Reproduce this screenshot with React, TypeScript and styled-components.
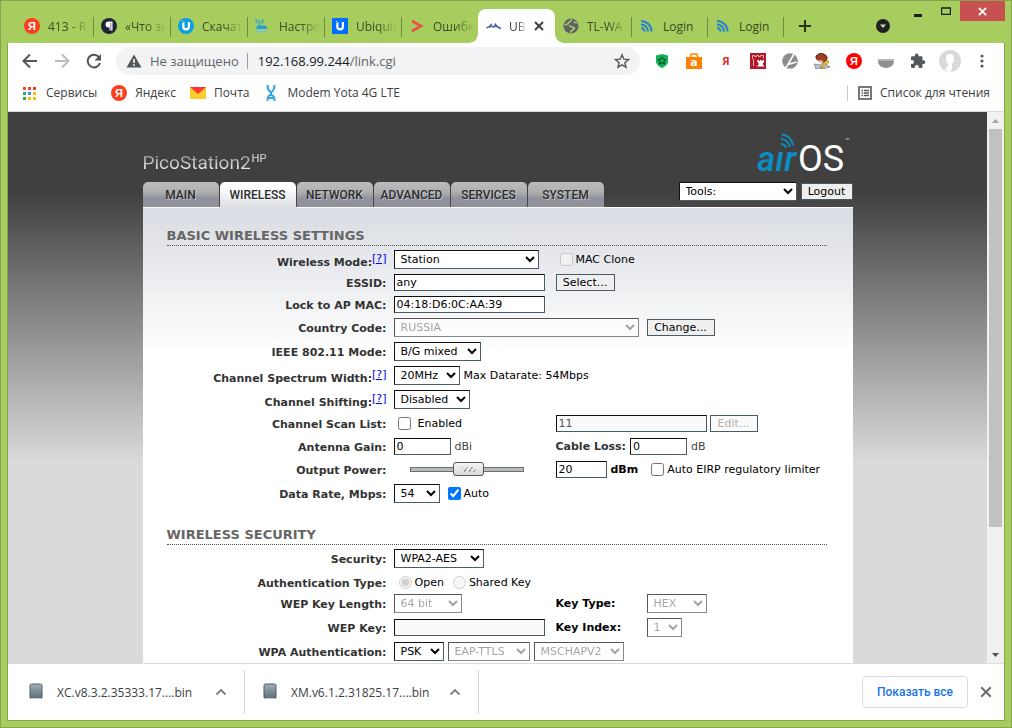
import React from "react";
import styled, { createGlobalStyle, css } from "styled-components";

const uiFont = '"Open Sans", "Noto Sans", sans-serif';
const pageFont = '"DejaVu Sans", Verdana, sans-serif';
const brandFont = 'Roboto, "Liberation Sans", sans-serif';

const GlobalStyle = createGlobalStyle`
  *, *::before, *::after { box-sizing: border-box; }
  body { margin: 0; font-family: ${uiFont}; font-size: 12px; color: #3c4043; }
  button, input, select { font: inherit; margin: 0; }
  svg { display: block; flex: none; }
`;

/* ---------- window frame ---------- */

const Frame = styled.div`
  display: flex;
  flex-direction: column;
  height: 100vh;
  border: 1px solid #87a34d;
  background: #a6cd5e;
`;

const TabStrip = styled.div`
  display: flex;
  height: 42px;
  flex: none;
  padding: 0 6px 0 15px;
`;

const Client = styled.div`
  flex: 1;
  min-height: 0;
  display: flex;
  flex-direction: column;
  margin: 0 6px 6px;
  border: 1px solid #87a34d;
  border-top: 0;
  background: #fff;
`;

const BrowserTab = styled.button<{ $active?: boolean; $narrow?: boolean }>`
  position: relative;
  display: flex;
  align-items: center;
  gap: 8px;
  flex: none;
  width: ${(p) => (p.$narrow ? 76 : 77)}px;
  height: 34px;
  margin-top: 8px;
  padding: 0 2px 0 8px;
  border: 0;
  background: none;
  color: #3d4a23;
  text-align: left;
  ${(p) =>
    p.$active
      ? css`
          gap: 7px;
          padding-right: 11px;
          background: #fff;
          border-radius: 8px 8px 0 0;
          color: #3c4043;
          &::before,
          &::after {
            content: "";
            position: absolute;
            bottom: 0;
            width: 8px;
            height: 8px;
          }
          &::before {
            left: -8px;
            background: radial-gradient(circle at 0 0, transparent 7px, #fff 8px);
          }
          &::after {
            right: -8px;
            background: radial-gradient(circle at 100% 0, transparent 7px, #fff 8px);
          }
        `
      : ""}
`;

const TabTitle = styled.span<{ $plain?: boolean }>`
  flex: 1;
  min-width: 0;
  overflow: hidden;
  white-space: nowrap;
  ${(p) => (p.$plain ? "" : "mask-image: linear-gradient(90deg, #000 50%, transparent 96%);")}
`;

const TabDivider = styled.i`
  position: absolute;
  right: -1px;
  top: 8px;
  width: 1px;
  height: 20px;
  background: #70893f;
`;

const StripButton = styled.button<{ $push?: boolean }>`
  display: flex;
  align-items: center;
  justify-content: center;
  width: 28px;
  height: 34px;
  margin: 8px 0 0 ${(p) => (p.$push ? "auto" : "8px")};
  padding: 0;
  border: 0;
  background: none;
`;

const WindowButtons = styled.div`
  display: flex;
  margin-left: 7px;
`;

const WindowButton = styled.button<{ $close?: boolean }>`
  display: flex;
  align-items: center;
  justify-content: center;
  width: ${(p) => (p.$close ? 45 : 28)}px;
  height: 20px;
  padding: 0;
  border: 0;
  background: ${(p) => (p.$close ? "#c75050" : "none")};
`;

/* ---------- toolbar and bookmarks ---------- */

const Toolbar = styled.div`
  display: flex;
  align-items: center;
  flex: none;
  height: 36px;
  padding: 0 6px;
`;

const IconButton = styled.button`
  display: flex;
  align-items: center;
  justify-content: center;
  width: 32px;
  height: 32px;
  flex: none;
  padding: 0;
  border: 0;
  background: none;
`;

const Omnibox = styled.div`
  display: flex;
  align-items: center;
  flex: 1;
  min-width: 0;
  height: 28px;
  margin: 0 6px;
  padding: 0 10px;
  border-radius: 14px;
  background: #f1f3f4;
  font-size: 13px;
`;

const NotSecure = styled.span`
  margin-left: 8px;
  padding-right: 8px;
  border-right: 1px solid #9a9da1;
  line-height: 16px;
  color: #5f6368;
  white-space: nowrap;
`;

const Address = styled.div`
  flex: 1;
  margin-left: 10px;
  color: #202124;
  white-space: nowrap;
  span {
    color: #5f6368;
  }
`;

const BookmarkBar = styled.nav`
  display: flex;
  align-items: center;
  flex: none;
  gap: 14px;
  height: 33px;
  padding: 0 14px 5px;
  border-bottom: 1px solid #dcdcdc;
`;

const Bookmark = styled.a<{ $last?: boolean }>`
  display: flex;
  align-items: center;
  gap: 8px;
  color: #3c4043;
  text-decoration: none;
  white-space: nowrap;
  ${(p) => (p.$last ? "margin-left: auto; border-left: 1px solid #ccc; padding-left: 10px; line-height: 16px;" : "")}
`;

/* ---------- page viewport ---------- */

const Viewport = styled.div`
  flex: 1;
  min-height: 0;
  display: flex;
`;

const Page = styled.main`
  flex: 1;
  min-width: 0;
  overflow: hidden;
  background: #dadada linear-gradient(#404040 0, #404040 80px, #dadada 350px) no-repeat;
  font-family: ${pageFont};
  font-size: 11px;
  color: #000;
`;

const ScrollBar = styled.div`
  display: flex;
  flex-direction: column;
  align-items: center;
  width: 17px;
  background: #f1f1f1;
`;

const ScrollArrow = styled.div`
  display: flex;
  align-items: center;
  justify-content: center;
  height: 17px;
  width: 17px;
`;

const ScrollTrack = styled.div`
  flex: 1;
  width: 13px;
`;

const ScrollThumb = styled.div`
  height: 77%;
  background: #c1c1c1;
`;

const Column = styled.div`
  width: 710px;
  max-width: 100%;
  margin: 0 auto;
`;

const Brand = styled.header`
  display: flex;
  justify-content: space-between;
  align-items: flex-end;
  height: 70px;
`;

const Device = styled.h1`
  display: flex;
  align-items: flex-start;
  gap: 1px;
  margin: 0 0 6px;
  font: 400 19px/26px ${brandFont};
  color: transparent;
  background: linear-gradient(#8a8a8a 4px, #fff 22px);
  background-clip: text;
  sup {
    font-size: 11px;
    line-height: 18px;
    color: #bbb;
  }
`;

const NavRow = styled.div`
  display: flex;
  align-items: flex-start;
  justify-content: space-between;
  height: 25px;
`;

const Nav = styled.nav`
  display: flex;
  gap: 1px;
`;

const NavTab = styled.a<{ $active?: boolean }>`
  width: 76px;
  height: ${(p) => (p.$active ? 26 : 25)}px;
  border-radius: 5px 5px 0 0;
  background: ${(p) =>
    p.$active ? "linear-gradient(#fff 20%, #dadde2)" : "linear-gradient(#bcbcbc, #aeafb1 40%, #8f929a 65%, #90939b)"};
  color: #2d2d2d;
  font: 500 12px/27px ${brandFont};
  text-align: center;
  text-decoration: none;
  text-shadow: 1px 1px 0 rgba(255, 255, 255, 0.4);
`;

const Tools = styled.div`
  display: flex;
  align-items: center;
  gap: 4px;
`;

const Panel = styled.form`
  min-height: 500px;
  padding: 18px 26px 24px 24px;
  border-top: 1px solid #fff;
  background: #fff linear-gradient(#d9dce2, #fff 145px) no-repeat;
`;

const Heading = styled.h2`
  margin: 0 0 4px;
  border-bottom: 1px dotted #555;
  color: #666;
  font-size: 13px;
  line-height: 19px;
  &:not(:first-child) {
    margin-top: 22px;
  }
`;

const Row = styled.div<{ $h?: number; $gap?: number }>`
  display: flex;
  align-items: center;
  height: ${(p) => p.$h ?? 19}px;
  margin-bottom: ${(p) => p.$gap ?? 5}px;
  white-space: nowrap;
`;

const Caption = styled.div<{ $help?: boolean }>`
  width: 220px;
  margin-right: 7px;
  flex: none;
  padding-top: ${(p) => (p.$help ? 5 : 2)}px;
  color: #333;
  font-weight: 700;
  line-height: 15px;
  text-align: right;
  a {
    position: relative;
    top: -4px;
    font-weight: 400;
    color: #0000ee;
  }
`;

const First = styled.div`
  display: flex;
  align-items: center;
  flex: none;
  width: 162px;
`;

const Rest = styled.div<{ $gap?: number }>`
  display: flex;
  align-items: center;
  gap: ${(p) => p.$gap ?? 4}px;
`;

const SubCaption = styled.label<{ $w?: number }>`
  width: ${(p) => (p.$w ? p.$w + "px" : "auto")};
  color: ${(p) => (p.$w ? "#000" : "#333")};
  font-weight: 700;
`;

const boxBorder = css`
  border: 1px solid;
  border-color: #111 #4b5b66 #4b5b66 #111;
  border-radius: 0;
`;

const Select = styled.select<{ $w: number }>`
  width: ${(p) => p.$w}px;
  height: 19px;
  flex: none;
  padding: 0 0 0 2px;
  background: #fff;
  color: #000;
  ${boxBorder}
  &:disabled {
    color: #808080;
    opacity: 0.7;
  }
`;

const TextInput = styled.input<{ $w: number }>`
  width: ${(p) => p.$w}px;
  height: 17px;
  flex: none;
  padding: 0 2px;
  background: #fff;
  color: #000;
  ${boxBorder}
  &:disabled {
    background: #fafafa;
    color: #545454;
  }
`;

const Button = styled.button<{ $w: number }>`
  width: ${(p) => p.$w}px;
  height: 17px;
  flex: none;
  padding: 0;
  border: 1px solid #4b5b66;
  border-radius: 0;
  background: #efefef;
  color: #000;
  line-height: 15px;
  text-align: center;
  &:disabled {
    background: #fafafa;
    color: #b0b0b0;
  }
`;

const Choice = styled.label<{ $gap?: number; $indent?: number }>`
  display: flex;
  align-items: center;
  gap: ${(p) => p.$gap ?? 3}px;
  margin-left: ${(p) => p.$indent ?? 4}px;
  input {
    width: 13px;
    height: 13px;
  }
`;

const Unit = styled.span<{ $strong?: boolean }>`
  color: ${(p) => (p.$strong ? "#000" : "#444")};
  font-weight: ${(p) => (p.$strong ? 700 : 400)};
`;

const PowerSlider = styled.input`
  appearance: none;
  width: 114px;
  height: 15px;
  margin-left: 16px;
  background: transparent;
  &::-webkit-slider-runnable-track {
    height: 5px;
    border: 1px solid #6b716b;
    background: #b8bcb8;
  }
  &::-webkit-slider-thumb {
    appearance: none;
    width: 31px;
    height: 14px;
    margin-top: -6px;
    border: 1px solid #555;
    border-radius: 3px;
    background:
      repeating-linear-gradient(125deg, #999 0 1px, transparent 1px 4px) center / 14px 5px no-repeat,
      linear-gradient(#f4f4f4, #d8d8d8);
  }
`;

/* ---------- download shelf ---------- */

const Shelf = styled.footer`
  display: flex;
  align-items: center;
  flex: none;
  height: 57px;
  padding: 0 2px 0 3px;
  border-top: 1px solid #dadce0;
`;

const Download = styled.div`
  display: flex;
  align-items: center;
  width: 234px;
  height: 44px;
  padding: 0 7px 0 18px;
  border-right: 1px solid #d0d2d5;
`;

const FileName = styled.span`
  flex: 1;
  margin-left: 14px;
  white-space: nowrap;
`;

const ShowAll = styled.button`
  width: 106px;
  height: 32px;
  margin: 0 2px 0 auto;
  padding: 0;
  border: 1px solid #dadce0;
  border-radius: 4px;
  background: #fff;
  color: #1a73e8;
  font: 500 12px/16px ${brandFont};
`;

/* ---------- drawings ---------- */

const YandexMark = ({ fill = "#fc3f1d" }: { fill?: string }) => (
  <svg width="16" height="16" viewBox="0 0 16 16">
    <circle cx="8" cy="8" r="8" fill={fill} />
    <text x="8" y="12" textAnchor="middle" fontFamily="Liberation Sans" fontWeight="700" fontSize="11" fill="#fff">
      Я
    </text>
  </svg>
);

const PilcrowMark = () => (
  <svg width="16" height="16" viewBox="0 0 16 16">
    <circle cx="8" cy="8" r="8" fill="#1f2333" />
    <path d="M11.500 3.500H7.500a3 3 0 0 0 0 6h1v3h3z" fill="#fff" />
    <path d="M9.800 5v7.500" stroke="#1f2333" strokeWidth=".6" />
  </svg>
);

const UbntMark = ({ square }: { square?: boolean }) => (
  <svg width="16" height="16" viewBox="0 0 16 16">
    {square ? <rect width="16" height="16" fill="#006fff" /> : <circle cx="8" cy="8" r="8" fill="#0a9fe0" />}
    <path d="M5.300 5v3.500a2.800 2.800 0 0 0 5.600 0V4" fill="none" stroke="#fff" strokeWidth="2.200" />
    <path d="M4 3.500h1M5.500 4.500h1" stroke="#fff" />
  </svg>
);

const RouterMark = () => (
  <svg width="16" height="16" viewBox="0 0 16 16" fill="none" stroke="#1ba3d8">
    <path d="M1.500 1Q0 3 1.500 5.500M7.500 1Q9 3 7.500 5.500M3 2Q2 3 3 4.500M6 2Q7 3 6 4.500M4.500 3V8" />
    <path d="M2.500 8h8l1.500 2.500H1.500z" fill="#1ba3d8" />
    <path d="M1 13.500h10" stroke="#6fc0dd" strokeWidth="1.500" />
  </svg>
);

const ArrowMark = () => (
  <svg width="16" height="16" viewBox="0 0 16 16">
    <path d="M3 3l9 5-9 5" fill="none" stroke="#e8524a" strokeWidth="2.600" />
  </svg>
);

const WaveMark = () => (
  <svg width="16" height="16" viewBox="0 0 16 16">
    <path
      d="M.5 10q3-.5 4.500-3.500 1.200 3 3 2.800M6.500 9.300q2-.5 3-3 1.500 3.300 5.500 4.200M3.500 9.500l1.500-1M9 9l1.500-.5"
      fill="none"
      stroke="#3d5f9f"
      strokeWidth="1.300"
    />
  </svg>
);

const GlobeMark = () => (
  <svg width="16" height="16" viewBox="0 0 16 16">
    <circle cx="8" cy="8" r="7.500" fill="#5f6368" />
    <path
      d="M9 1.500c-2 .8-.5 2-2.500 2.500s-.5 2-2.500 2.300L1.800 7M6 8c2.500-.5 3 1.500 4.500 1.500s1 2-1 2.500-.5 2-2.500 2.200M11 3.500c.5 1.500 1.500 1 3 1.500"
      fill="none"
      stroke="#a6cd5e"
      strokeWidth="1.600"
    />
  </svg>
);

const FeedMark = () => (
  <svg width="16" height="16" viewBox="0 0 16 16" fill="none" stroke="#2b86c9" strokeWidth="2.200">
    <path d="M2 3A10.500 10.500 0 0 1 12.500 13.500M2 6.500a7 7 0 0 1 7 7M2 10A3.500 3.500 0 0 1 5.500 13.500" />
  </svg>
);

const Cross = ({ size = 10, color = "#3c4043", w = 2 }: { size?: number; color?: string; w?: number }) => (
  <svg width={size} height={size} viewBox="0 0 10 10">
    <path d="M1 1l8 8M9 1l-8 8" stroke={color} strokeWidth={w} />
  </svg>
);

const Chevron = () => (
  <svg width="12" height="8" viewBox="0 0 12 8">
    <path d="M1.500 6.500L6 2l4.500 4.500" fill="none" stroke="#7b7f83" strokeWidth="1.800" />
  </svg>
);

const FileMark = () => (
  <svg width="14" height="18" viewBox="0 0 14 18">
    <defs>
      <linearGradient id="fileFill" x1="0" y1="0" x2="0" y2="1">
        <stop offset="0" stopColor="#9fb0b8" />
        <stop offset="1" stopColor="#5a6d78" />
      </linearGradient>
    </defs>
    <rect x="1" y="1" width="12" height="14.500" rx="1.500" fill="url(#fileFill)" stroke="#4f5f69" />
    <path d="M2 15.500h10" stroke="#c5ced3" />
  </svg>
);

const BackArrow = ({ color, flip }: { color: string; flip?: boolean }) => (
  <svg width="16" height="16" viewBox="0 0 16 16" fill="none" stroke={color} strokeWidth="2">
    <path d={flip ? "M1 8h13M8 1.500L14.500 8 8 14.500" : "M15 8H2M8 1.500L1.500 8 8 14.500"} />
  </svg>
);

const Reload = () => (
  <svg width="16" height="16" viewBox="0 0 16 16">
    <path d="M13.200 4.500A6.300 6.300 0 1 0 14 10" fill="none" stroke="#4f5357" strokeWidth="2" />
    <path d="M15 1v6.500H8.500z" fill="#4f5357" />
  </svg>
);

const Warning = () => (
  <svg width="16" height="14" viewBox="0 0 16 14">
    <path d="M8 0.500L15.500 13.500H.5z" fill="#54585c" />
    <path d="M8 5v4M8 10.200v1.700" stroke="#f1f3f4" strokeWidth="1.600" />
  </svg>
);

const Star = () => (
  <svg width="16" height="16" viewBox="0 0 16 16">
    <path
      d="M8 1.800l1.800 4.400 4.700.4-3.600 3.100 1.100 4.600L8 11.800l-4 2.500 1.100-4.600L1.500 6.600l4.700-.4z"
      fill="none"
      stroke="#54585c"
      strokeWidth="1.400"
    />
  </svg>
);

const extensions: { name: string; art: React.ReactNode }[] = [
  {
    name: "Shield",
    art: (
      <svg width="16" height="16" viewBox="0 0 16 16">
        <path d="M8 1l6 1.500v6c0 3-3 5-6 6.500-3-1.500-6-3.500-6-6.500v-6z" fill="#12b259" />
        <path d="M8 3.800l1.200 2.500 2.700.3-2 1.900.6 2.600L8 9.800l-2.500 1.300.6-2.600-2-1.900 2.700-.3z" fill="none" stroke="#0b3f22" />
      </svg>
    ),
  },
  {
    name: "Shopping",
    art: (
      <svg width="16" height="16" viewBox="0 0 16 16">
        <path d="M0 4h16v12H0z" fill="#ff8200" />
        <path d="M4.500 5V2.500q0-1.500 1.500-1.500h4q1.500 0 1.500 1.500V5" fill="none" stroke="#ff8200" strokeWidth="1.500" />
        <text x="8" y="13" textAnchor="middle" fontFamily="DejaVu Sans" fontWeight="700" fontSize="11" fill="#fff">
          a
        </text>
      </svg>
    ),
  },
  {
    name: "Yandex letter",
    art: (
      <svg width="16" height="16" viewBox="0 0 16 16">
        <text x="8" y="12" textAnchor="middle" fontFamily="Roboto" fontWeight="700" fontSize="11" fill="#e52620">
          Я
        </text>
      </svg>
    ),
  },
  {
    name: "Fortress",
    art: (
      <svg width="16" height="16" viewBox="0 0 16 16">
        <rect width="16" height="16" fill="#b01c2a" />
        <path d="M3.500 13V6.500l-1-1v-3h2v1h2v-1h2v1h2v-1h3v3" fill="none" stroke="#e9b0b4" />
        <path d="M7.500 7H9v1h1V7h1.500v1h1V7H14v2.500h-1V12h1v1.500H7.500V12h1V9.500h-1z" fill="#fff" />
      </svg>
    ),
  },
  {
    name: "Leaf",
    art: (
      <svg width="16" height="16" viewBox="0 0 16 16">
        <circle cx="8" cy="8" r="7.800" fill="#8d8d8d" />
        <path d="M12.500 0L6 11.500 14.500 9M6 11.500L3 16" fill="none" stroke="#fff" strokeWidth="1.600" />
      </svg>
    ),
  },
  {
    name: "Painter",
    art: (
      <svg width="16" height="16" viewBox="0 0 16 16">
        <path d="M2 3q3-4 8-2 4 2 3 5l-3 3-5-1q-4-2-3-5z" fill="#9b3f22" stroke="#5b2413" />
        <path d="M4.500 7l4.500.5-.5 2.500-3-.5z" fill="#e9b384" />
        <path d="M0 11l6 1 3-2 3 1 4 3-4 1-3 1-4-1-3 1z" fill="#b9c6d6" stroke="#5a6470" strokeWidth=".6" />
        <path d="M6 15l7-8 2 2-7 6z" fill="#f5c518" stroke="#8a6a00" strokeWidth=".6" />
      </svg>
    ),
  },
  { name: "Yandex", art: <YandexMark fill="#f00" /> },
  {
    name: "Bowl",
    art: (
      <svg width="16" height="16" viewBox="0 0 16 16">
        <path d="M0 6h16v2q0 6-8 7-8-1-8-7z" fill="#8f8f8f" />
        <path d="M0 6h16v2H0z" fill="#b5b5b5" />
      </svg>
    ),
  },
  {
    name: "Extensions",
    art: (
      <svg width="16" height="16" viewBox="0 0 16 16">
        <path
          d="M13.500 7.200h-1V4.500q0-1.200-1.200-1.200H8.500v-1a1.800 1.800 0 0 0-3.600 0v1H2.200Q1 3.300 1 4.500v2.600h1a2 2 0 0 1 0 4H1v2.700Q1 15 2.200 15h2.600v-1a2 2 0 0 1 4 0v1h2.500q1.200 0 1.200-1.200v-2.900h1a1.800 1.800 0 0 0 0-3.700z"
          fill="#54585c"
        />
      </svg>
    ),
  },
  {
    name: "Profile",
    art: (
      <svg width="22" height="22" viewBox="0 0 22 22">
        <circle cx="11" cy="11" r="11" fill="#d9d9d9" />
        <path d="M11 4q4 0 4 5 0 3-2 5v4q-1 2-1 4-4 0-6-2 1-3 3-4v-2Q7 12 7 9q0-5 4-5z" fill="#fff" />
      </svg>
    ),
  },
  {
    name: "Menu",
    art: (
      <svg width="4" height="16" viewBox="0 0 4 16" fill="#54585c">
        <circle cx="2" cy="3" r="1.600" />
        <circle cx="2" cy="8" r="1.600" />
        <circle cx="2" cy="13" r="1.600" />
      </svg>
    ),
  },
];

const AppsMark = () => {
  const colors = ["#ea4335", "#ea4335", "#ea4335", "#34a853", "#4285f4", "#fbbc04", "#34a853", "#fbbc04", "#fbbc04"];
  return (
    <svg width="16" height="16" viewBox="0 0 16 16">
      {colors.map((c, i) => (
        <rect key={i} x={1 + (i % 3) * 5} y={2 + Math.floor(i / 3) * 5} width="3" height="3" fill={c} />
      ))}
    </svg>
  );
};

const MailMark = () => (
  <svg width="16" height="16" viewBox="0 0 16 16">
    <path d="M0 2h16v12H0z" fill="#ffcc2e" />
    <path d="M0 2h16L8 9z" fill="#f33" />
  </svg>
);

const ModemMark = () => (
  <svg width="16" height="16" viewBox="0 0 16 16" fill="none" stroke="#31a5dc" strokeWidth="2">
    <path d="M4.500 0q0 5 3.500 7.500M11.500 0q0 5-3.500 7.500M4.500 16q0-6 3.500-6t3.500 6" />
    <path d="M8 7v3M5.500 13h5" />
  </svg>
);

const ListMark = () => (
  <svg width="14" height="14" viewBox="0 0 14 14" fill="none" stroke="#54585c">
    <rect x="1" y="1" width="12" height="12" strokeWidth="1.600" />
    <path d="M3.500 4.500h1.500M3.500 7h1.500M3.500 9.500h1.500M6 4.500h5M6 7h5M6 9.500h5" strokeWidth="1.300" />
  </svg>
);

const AirOsLogo = () => (
  <svg width="98" height="50" viewBox="0 0 98 50" role="img" aria-label="airOS">
    <g fontFamily={brandFont}>
      <text x="2" y="39" fontSize="35" fontWeight="500" fontStyle="italic" fill="#0a8ec4">
        aır
      </text>
      <text x="43" y="39" fontSize="36" fill="#fff">
        OS
      </text>
      <text x="90" y="11" fontSize="7" fill="#ddd">
        ™
      </text>
    </g>
    <path
      d="M26 12q4 0 5 4M26 7q7 .5 9 8M27 2.500q9 1 11 11"
      fill="none"
      stroke="#0a8ec4"
      strokeWidth="2"
    />
  </svg>
);

/* ---------- content ---------- */

const tabs = [
  { title: "413 - R", icon: <YandexMark /> },
  { title: "«Что зн", icon: <PilcrowMark /> },
  { title: "Скачат", icon: <UbntMark /> },
  { title: "Настро", icon: <RouterMark /> },
  { title: "Ubiquit", icon: <UbntMark square /> },
  { title: "Ошибк", icon: <ArrowMark /> },
  { title: "UBI", icon: <WaveMark />, active: true },
  { title: "TL-WA", icon: <GlobeMark />, narrow: true },
  { title: "Login", icon: <FeedMark />, narrow: true, plain: true },
  { title: "Login", icon: <FeedMark />, narrow: true, plain: true },
];

const sections = ["MAIN", "WIRELESS", "NETWORK", "ADVANCED", "SERVICES", "SYSTEM"];

type PickProps = { id: string; w: number; value: string; disabled?: boolean; label?: string };
const Pick = ({ id, w, value, disabled, label }: PickProps) => (
  <Select id={id} $w={w} defaultValue={value} disabled={disabled} aria-label={label}>
    <option>{value}</option>
  </Select>
);

const Label = ({ id, children, help }: { id: string; children: string; help?: boolean }) => (
  <Caption $help={help}>
    <label htmlFor={id}>{children}</label>
    {help && <a href="#help">[?]</a>}
  </Caption>
);

const BasicSettings = () => (
  <>
    <Heading>BASIC WIRELESS SETTINGS</Heading>
    <Row>
      <Label id="mode" help>Wireless Mode:</Label>
      <First><Pick id="mode" w={145} value="Station" /></First>
      <Choice><input type="checkbox" disabled />MAC Clone</Choice>
    </Row>
    <Row $h={17}>
      <Label id="essid">ESSID:</Label>
      <First><TextInput id="essid" $w={151} defaultValue="any" /></First>
      <Button type="button" $w={59}>Select...</Button>
    </Row>
    <Row $h={17}>
      <Label id="apmac">Lock to AP MAC:</Label>
      <TextInput id="apmac" $w={151} defaultValue="04:18:D6:0C:AA:39" />
    </Row>
    <Row>
      <Label id="country">Country Code:</Label>
      <Rest $gap={8}>
        <Pick id="country" w={245} value="RUSSIA" disabled />
        <Button type="button" $w={68}>Change...</Button>
      </Rest>
    </Row>
    <Row>
      <Label id="ieee">IEEE 802.11 Mode:</Label>
      <Pick id="ieee" w={87} value="B/G mixed" />
    </Row>
    <Row>
      <Label id="width" help>Channel Spectrum Width:</Label>
      <Rest>
        <Pick id="width" w={66} value="20MHz" />
        <span>Max Datarate: 54Mbps</span>
      </Rest>
    </Row>
    <Row>
      <Label id="shift" help>Channel Shifting:</Label>
      <Pick id="shift" w={76} value="Disabled" />
    </Row>
    <Row>
      <Label id="scan">Channel Scan List:</Label>
      <First><Choice $gap={7}><input id="scan" type="checkbox" />Enabled</Choice></First>
      <Rest $gap={3}>
        <TextInput $w={151} defaultValue="11" disabled aria-label="Channels" />
        <Button type="button" $w={48} disabled>Edit...</Button>
      </Rest>
    </Row>
    <Row $h={17} $gap={6}>
      <Label id="gain">Antenna Gain:</Label>
      <First>
        <Rest>
          <TextInput id="gain" $w={57} defaultValue="0" />
          <Unit>dBi</Unit>
        </Rest>
      </First>
      <Rest>
        <SubCaption htmlFor="loss">Cable Loss:</SubCaption>
        <TextInput id="loss" $w={57} defaultValue="0" />
        <Unit>dB</Unit>
      </Rest>
    </Row>
    <Row $h={17} $gap={6}>
      <Label id="power">Output Power:</Label>
      <First><PowerSlider id="power" type="range" min={0} max={100} defaultValue={53} /></First>
      <Rest>
        <TextInput $w={51} defaultValue="20" aria-label="Output power, dBm" />
        <Unit $strong>dBm</Unit>
        <Choice $indent={9}><input type="checkbox" />Auto EIRP regulatory limiter</Choice>
      </Rest>
    </Row>
    <Row>
      <Label id="rate">Data Rate, Mbps:</Label>
      <Rest>
        <Pick id="rate" w={46} value="54" />
        <Choice><input type="checkbox" defaultChecked />Auto</Choice>
      </Rest>
    </Row>
  </>
);

const SecuritySettings = () => (
  <>
    <Heading>WIRELESS SECURITY</Heading>
    <Row $gap={7}>
      <Label id="security">Security:</Label>
      <Pick id="security" w={90} value="WPA2-AES" />
    </Row>
    <Row $h={14}>
      <Label id="authOpen">Authentication Type:</Label>
      <Choice $indent={5}><input id="authOpen" type="radio" name="auth" defaultChecked disabled />Open</Choice>
      <Choice $indent={9}><input type="radio" name="auth" disabled />Shared Key</Choice>
    </Row>
    <Row>
      <Label id="wepLength">WEP Key Length:</Label>
      <First><Pick id="wepLength" w={68} value="64 bit" disabled /></First>
      <SubCaption htmlFor="keyType" $w={91}>Key Type:</SubCaption>
      <Pick id="keyType" w={60} value="HEX" disabled />
    </Row>
    <Row>
      <Label id="wepKey">WEP Key:</Label>
      <First><TextInput id="wepKey" $w={151} disabled /></First>
      <SubCaption htmlFor="keyIndex" $w={91}>Key Index:</SubCaption>
      <Pick id="keyIndex" w={35} value="1" disabled />
    </Row>
    <Row>
      <Label id="wpa">WPA Authentication:</Label>
      <Rest>
        <Pick id="wpa" w={50} value="PSK" />
        <Pick id="eap" w={82} value="EAP-TTLS" disabled label="EAP method" />
        <Pick id="inner" w={90} value="MSCHAPV2" disabled label="Inner authentication" />
      </Rest>
    </Row>
  </>
);

export default function App() {
  return (
    <Frame>
      <GlobalStyle />
      <TabStrip>
        {tabs.map((t, i) => (
          <BrowserTab key={i} $active={t.active} $narrow={t.narrow}>
            {t.icon}
            <TabTitle $plain={t.plain}>{t.title}</TabTitle>
            {t.active && <Cross />}
            {!t.active && !tabs[i + 1]?.active && <TabDivider />}
          </BrowserTab>
        ))}
        <StripButton aria-label="New tab">
          <svg width="12" height="12" viewBox="0 0 12 12">
            <path d="M6 0v12M0 6h12" stroke="#2b3218" strokeWidth="2" />
          </svg>
        </StripButton>
        <StripButton $push aria-label="Search tabs">
          <svg width="14" height="14" viewBox="0 0 14 14">
            <circle cx="7" cy="7" r="7" fill="#202124" />
            <path d="M4 5.500h6L7 9z" fill="#cfe3a6" />
          </svg>
        </StripButton>
        <WindowButtons>
          <WindowButton aria-label="Minimize">
            <svg width="8" height="12" viewBox="0 0 8 12">
              <path d="M0 10.500h8" stroke="#1c1c1c" strokeWidth="3" />
            </svg>
          </WindowButton>
          <WindowButton aria-label="Maximize">
            <svg width="10" height="8" viewBox="0 0 10 8">
              <path d="M.5 1h9v6.500h-9zM0 1h10" fill="none" stroke="#1c1c1c" strokeWidth="1.400" />
            </svg>
          </WindowButton>
          <WindowButton $close aria-label="Close">
            <Cross size={9} color="#fff" />
          </WindowButton>
        </WindowButtons>
      </TabStrip>
      <Client>
        <Toolbar>
          <IconButton aria-label="Back"><BackArrow color="#54585c" /></IconButton>
          <IconButton aria-label="Forward"><BackArrow color="#b9bbbe" flip /></IconButton>
          <IconButton aria-label="Reload"><Reload /></IconButton>
          <Omnibox>
            <Warning />
            <NotSecure>Не защищено</NotSecure>
            <Address>192.168.99.244<span>/link.cgi</span></Address>
            <Star />
          </Omnibox>
          {extensions.map((e) => (
            <IconButton key={e.name} aria-label={e.name}>{e.art}</IconButton>
          ))}
        </Toolbar>
        <BookmarkBar>
          <Bookmark href="#apps"><AppsMark />Сервисы</Bookmark>
          <Bookmark href="#yandex"><YandexMark />Яндекс</Bookmark>
          <Bookmark href="#mail"><MailMark />Почта</Bookmark>
          <Bookmark href="#modem"><ModemMark />Modem Yota 4G LTE</Bookmark>
          <Bookmark href="#reading" $last><ListMark />Список для чтения</Bookmark>
        </BookmarkBar>
        <Viewport>
          <Page>
            <Column>
              <Brand>
                <Device>PicoStation2<sup>HP</sup></Device>
                <AirOsLogo />
              </Brand>
              <NavRow>
                <Nav>
                  {sections.map((s) => (
                    <NavTab key={s} href={"#" + s.toLowerCase()} $active={s === "WIRELESS"}>{s}</NavTab>
                  ))}
                </Nav>
                <Tools>
                  <Pick id="tools" w={118} value="Tools:" label="Tools" />
                  <Button type="button" $w={52}>Logout</Button>
                </Tools>
              </NavRow>
              <Panel>
                <BasicSettings />
                <SecuritySettings />
              </Panel>
            </Column>
          </Page>
          <ScrollBar>
            <ScrollArrow>
              <svg width="7" height="4" viewBox="0 0 7 4"><path d="M0 4h7L3.500 0z" fill="#a3a3a3" /></svg>
            </ScrollArrow>
            <ScrollTrack><ScrollThumb /></ScrollTrack>
            <ScrollArrow>
              <svg width="7" height="4" viewBox="0 0 7 4"><path d="M0 0h7L3.500 4z" fill="#505050" /></svg>
            </ScrollArrow>
          </ScrollBar>
        </Viewport>
        <Shelf>
          <Download><FileMark /><FileName>XC.v8.3.2.35333.17....bin</FileName><IconButton aria-label="Options"><Chevron /></IconButton></Download>
          <Download><FileMark /><FileName>XM.v6.1.2.31825.17....bin</FileName><IconButton aria-label="Options"><Chevron /></IconButton></Download>
          <ShowAll>Показать все</ShowAll>
          <IconButton aria-label="Close downloads"><Cross size={12} color="#6b6f73" w={1.8} /></IconButton>
        </Shelf>
      </Client>
    </Frame>
  );
}
